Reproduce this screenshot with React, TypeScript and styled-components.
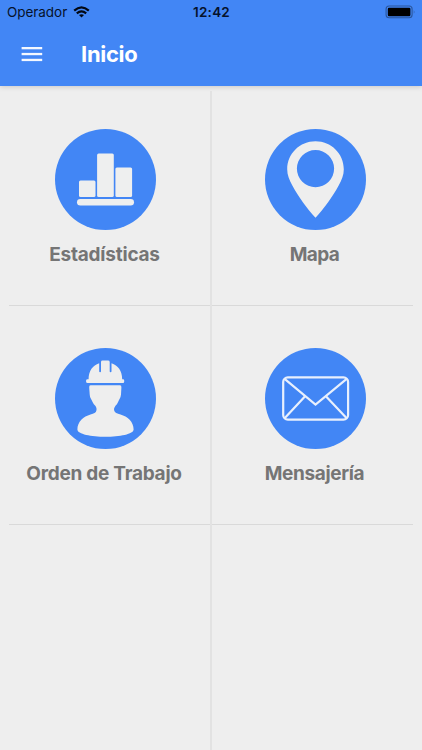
import React from "react";
import styled, { createGlobalStyle } from "styled-components";

const GlobalStyle = createGlobalStyle`
  * { box-sizing: border-box; }
  html, body { margin: 0; padding: 0; background: #eeeeee; }
`;

const Screen = styled.div`
  width: 422px;
  height: 750px;
  display: flex;
  flex-direction: column;
  overflow: hidden;
  background: #eeeeee;
  font-family: Inter, "Liberation Sans", sans-serif;
`;

const Header = styled.header`
  flex: none;
  height: 85.5px;
  background: #4286f5;
  box-shadow: 0 1px 5px rgba(0, 0, 0, 0.16);
`;

const StatusBar = styled.div`
  height: 24px;
  display: grid;
  grid-template-columns: 1fr auto 1fr;
  align-items: center;
  padding: 0 6px 0 7px;
  color: #06122b;
`;

const Carrier = styled.div`
  display: flex;
  align-items: center;
  gap: 6px;
  font-size: 13.5px;
  line-height: 24px;
  letter-spacing: -0.05px;
`;

const Clock = styled.time`
  font-size: 13.5px;
  line-height: 24px;
  font-weight: 600;
  letter-spacing: 0.25px;
`;

const BatteryIcon = styled.svg`
  justify-self: end;
`;

const Toolbar = styled.div`
  height: 60px;
  display: flex;
  align-items: center;
  padding: 0 0 0 21px;
`;

const MenuButton = styled.button`
  display: flex;
  width: 60px;
  padding: 0;
  border: 0;
  background: none;
`;

const Title = styled.h1`
  margin: 0;
  color: #fff;
  font-size: 22px;
  line-height: 28px;
  font-weight: 700;
  letter-spacing: -0.3px;
`;

const Board = styled.main`
  flex: 1;
  display: flex;
  padding-top: 5.5px;
`;

const Column = styled.section<{ $side: "left" | "right" }>`
  width: ${(p) => (p.$side === "left" ? "212px" : "210px")};
  border-right: ${(p) => (p.$side === "left" ? "2px solid #e2e2e2" : "0")};
`;

const Tile = styled.article<{ $side: "left" | "right"; $first?: boolean }>`
  display: flex;
  flex-direction: column;
  align-items: center;
  height: ${(p) => (p.$first ? "215px" : "219px")};
  padding-top: ${(p) => (p.$first ? "38px" : "42px")};
  ${(p) => (p.$side === "left" ? "padding-left: 1px;" : "padding-right: 3px;")}
`;

const Divider = styled.hr<{ $side: "left" | "right" }>`
  height: 1px;
  border: 0;
  margin: -1px ${(p) => (p.$side === "right" ? "9px" : "0")} 0
    ${(p) => (p.$side === "left" ? "9px" : "0")};
  background: #d9d9d9;
`;

const Badge = styled.svg`
  flex: none;
  display: block;
`;

const Label = styled.h2<{ $spacing: number; $shift?: number }>`
  margin: 11px 0 0 ${(p) => p.$shift ?? 0}px;
  color: #757575;
  font-size: 19px;
  line-height: 28px;
  font-weight: 700;
  letter-spacing: ${(p) => p.$spacing}px;
  white-space: nowrap;
`;

const ChartArt = () => (
  <g fill="#eeefef">
    <rect x="24" y="51.5" width="16.5" height="16.5" rx="1.5" />
    <rect x="42.1" y="24.5" width="16.7" height="43.5" rx="1.5" />
    <rect x="60.4" y="38.5" width="16.7" height="29.5" rx="1.5" />
    <rect x="22" y="70" width="57" height="6.6" rx="3.3" />
  </g>
);

const PinArt = () => (
  <path
    fill="#eeeeee"
    fillRule="evenodd"
    d="M50.5 12.2C34.8 12.2 22.2 24.6 22.2 40.2C22.2 46 24.2 50.7 27.2 56.2C33.6 68 42 79.5 50.5 88.8C59 79.5 67.4 68 73.8 56.2C76.8 50.7 78.8 46 78.8 40.2C78.8 24.6 66.2 12.2 50.5 12.2ZM50.5 21A18.6 18.6 0 1 1 50.5 58.2A18.6 18.6 0 1 1 50.5 21Z"
  />
);

const WorkerArt = () => (
  <g fill="#eeeeee">
    <path d="M33.6 31.2C33.6 23 37.8 17.2 44.2 15.3V23.2Q44.2 24.2 45.1 24.2Q46 24.2 46 23.2V14Q46 12.6 47.6 12.6H53Q54.7 12.6 54.7 14V23.2Q54.7 24.2 55.6 24.2Q56.5 24.2 56.5 23.2V15.3C62.9 17.2 67.2 23 67.2 31.2H68Q69.2 31.2 69.2 32.4V33.8Q69.2 35 68 35H32.6Q31.1 35 31.1 33.8V32.4Q31.1 31.2 32.6 31.2Z" />
    <path d="M35.5 37.3H65Q66.6 37.3 66.4 39.5L66 46.5Q65.8 48.8 64.8 50.4C63.5 52.5 62.7 55.8 60.5 57.8C59.1 60 58.8 61 59.2 62.5C59.8 65 62 65.4 65.5 66.4C72.5 68.4 78.6 73.5 78.6 81.5C78.6 86.2 64.5 88.8 50.5 88.8C36.5 88.8 22.4 86.2 22.4 81.5C22.4 73.5 28.5 68.4 35.5 66.4C39 65.4 41 65 41.4 62.5C41.8 60.8 41.5 59.6 40.3 57.8C38.2 55.8 37 52.5 35.8 50.4Q34.8 48.8 34.7 46.5L34.2 39.5Q34 37.3 35.5 37.3Z" />
  </g>
);

const MailArt = () => (
  <g fill="none" stroke="#e8f0fd" strokeWidth="2.2" strokeLinejoin="miter">
    <rect x="18.2" y="29.4" width="64.9" height="42.2" rx="4.6" />
    <path d="M19.6 30.8L50.5 56.5L81.7 30.8" />
    <path d="M19.6 70.2L40.1 48.2M81.7 70.2L60.9 48.2" />
  </g>
);

type Item = { text: string; spacing: number; shift?: number; Art: React.FC };

const leftItems: Item[] = [
  { text: "Estadísticas", spacing: -0.22, shift: -2, Art: ChartArt },
  { text: "Orden de Trabajo", spacing: -0.25, shift: -3, Art: WorkerArt },
];

const rightItems: Item[] = [
  { text: "Mapa", spacing: -0.6, shift: -2, Art: PinArt },
  { text: "Mensajería", spacing: -0.35, shift: -2, Art: MailArt },
];

const TileColumn = ({ side, items }: { side: "left" | "right"; items: Item[] }) => (
  <Column $side={side}>
    {items.map(({ text, spacing, shift, Art }, i) => (
      <React.Fragment key={text}>
        <Tile $side={side} $first={i === 0}>
          <Badge width="101" height="101" viewBox="0 0 101 101" aria-hidden>
            <circle cx="50.5" cy="50.5" r="50.5" fill="#4286f5" />
            <Art />
          </Badge>
          <Label $spacing={spacing} $shift={shift}>{text}</Label>
        </Tile>
        <Divider $side={side} />
      </React.Fragment>
    ))}
  </Column>
);

export default function App() {
  return (
    <Screen>
      <GlobalStyle />
      <Header>
        <StatusBar>
          <Carrier>
            Operador
            <svg width="17" height="12" viewBox="0 0 17 12" fill="none" stroke="#020814" strokeWidth="2.2">
              <path d="M1.2 4.6Q8.5 -1.9 15.8 4.6" />
              <path d="M3.8 7.4Q8.5 3.4 13.2 7.4" />
              <path d="M8.5 11.6L6 9.1Q8.5 7.2 11 9.1Z" fill="#020814" stroke="none" />
            </svg>
          </Carrier>
          <Clock>12:42</Clock>
          <BatteryIcon width="31" height="14" viewBox="0 0 31 14">
            <rect x="1.1" y="1" width="26" height="11.8" rx="3" fill="none" stroke="#2a569d" strokeWidth="1.1" />
            <rect x="2.8" y="2.8" width="22.6" height="8.4" rx="1.2" fill="#000" />
            <path d="M28.8 5Q30.2 6.9 28.8 8.8Z" fill="#2a569d" />
          </BatteryIcon>
        </StatusBar>
        <Toolbar>
          <MenuButton aria-label="Menú">
            <svg width="22" height="16" viewBox="0 0 22 16" fill="#f4f8ff">
              <rect x="0.6" y="1" width="20.6" height="2.3" />
              <rect x="0.6" y="6.9" width="20.6" height="2.3" />
              <rect x="0.6" y="12.8" width="20.6" height="2.3" />
            </svg>
          </MenuButton>
          <Title>Inicio</Title>
        </Toolbar>
      </Header>
      <Board>
        <TileColumn side="left" items={leftItems} />
        <TileColumn side="right" items={rightItems} />
      </Board>
    </Screen>
  );
}
